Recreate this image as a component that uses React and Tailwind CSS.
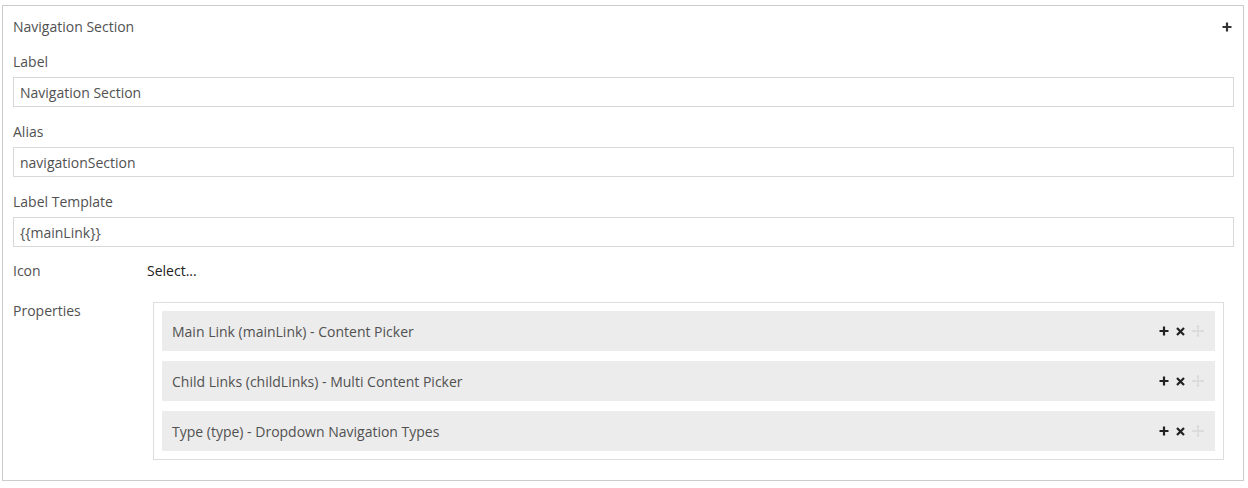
import React from "react";

const Plus = ({ className = "" }) => (
  <svg width="10" height="10" viewBox="0 0 10 10" className={className}>
    <path d="M5 0.5V9.5M0.5 5H9.5" stroke="currentColor" strokeWidth="2.2" />
  </svg>
);
const Cross = () => (
  <svg width="9" height="9" viewBox="0 0 9 9">
    <path d="M1 1L8 8M8 1L1 8" stroke="currentColor" strokeWidth="2.2" />
  </svg>
);
const Move = () => (
  <svg width="12" height="12" viewBox="0 0 12 12">
    <path d="M6 0.5V11.5M0.5 6H11.5" stroke="currentColor" strokeWidth="1.3" />
    <path d="M6 0L4.3 2H7.7Z M6 12L4.3 10H7.7Z M0 6L2 4.3V7.7Z M12 6L10 4.3V7.7Z" fill="currentColor" />
  </svg>
);

const Field = ({ label, value }) => (
  <div className="flex flex-col">
    <div className="h-[18px] leading-[18px]">{label}</div>
    <div className="mt-[6px] h-[30px] border border-[#d8d8d8] px-[6px] flex items-center">{value}</div>
  </div>
);

const rows = [
  "Main Link (mainLink) - Content Picker",
  "Child Links (childLinks) - Multi Content Picker",
  "Type (type) - Dropdown Navigation Types",
];

export default function App() {
  return (
    <div
      className="bg-white w-[1248px] h-[488px] pt-[5px] pl-[2px] text-[14px] text-[#515151]"
      style={{ fontFamily: '"Open Sans", sans-serif' }}
    >
      <div className="w-[1242px] h-[476px] border border-[#cccccc] pl-[10px] pr-[9px]">
        <div className="mt-[12px] h-[18px] leading-[18px] flex items-center justify-between">
          <span>Navigation Section</span>
          <span className="text-[#333] mr-[2px]"><Plus /></span>
        </div>
        <div className="mt-[17px] flex flex-col gap-[16px]">
          <Field label="Label" value="Navigation Section" />
          <Field label="Alias" value="navigationSection" />
          <Field label="Label Template" value="{{mainLink}}" />
        </div>
        <div className="mt-[15px] flex h-[18px] leading-[18px]">
          <div className="w-[134px]">Icon</div>
          <div className="text-[#222]">Select...</div>
        </div>
        <div className="mt-[22px] flex">
          <div className="w-[140px] leading-[18px]">Properties</div>
          <div className="w-[1071px] border border-[#dddddd] p-[8px] flex flex-col gap-[10px]">
            {rows.map((r) => (
              <div key={r} className="h-[40px] bg-[#ececec] flex items-center justify-between pl-[10px] pr-[11px]">
                <span>{r}</span>
                <div className="flex items-center gap-[7px]">
                  <span className="text-[#222] flex"><Plus /></span>
                  <span className="text-[#222] flex"><Cross /></span>
                  <span className="text-[#d8d8d8] flex"><Move /></span>
                </div>
              </div>
            ))}
          </div>
        </div>
      </div>
    </div>
  );
}
